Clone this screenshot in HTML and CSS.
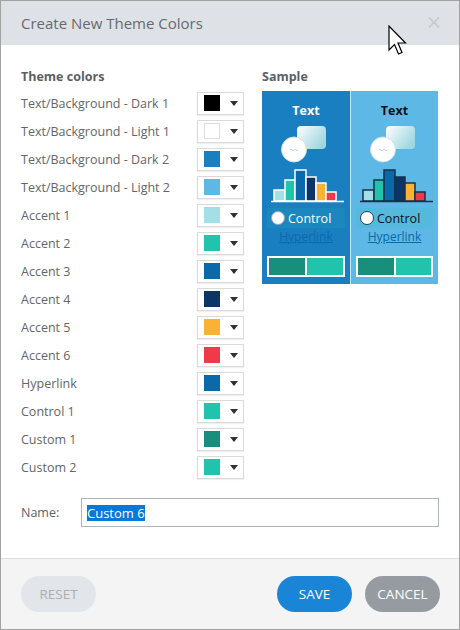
FILE: index.html
```html
<!DOCTYPE html>
<html>
<head>
<meta charset="utf-8">
<link rel="stylesheet" href="styles.css">
</head>
<body>
<div class="dialog">
  <div class="header">
    <span class="title">Create New Theme Colors</span>
    <svg class="close" width="12" height="11" viewBox="0 0 12 11"><path d="M1 0.5 L11 10.5 M11 0.5 L1 10.5" stroke="#c9cdd1" stroke-width="1.8" fill="none"/></svg>
  </div>
  <div class="body">
    <div class="columns">
      <div class="theme">
        <div class="heading">Theme colors</div>
        <div class="row"><span class="label">Text/Background - Dark 1</span><div class="picker"><span class="swatch c-black"></span><span class="caret"></span></div></div>
        <div class="row"><span class="label">Text/Background - Light 1</span><div class="picker"><span class="swatch c-white"></span><span class="caret"></span></div></div>
        <div class="row"><span class="label">Text/Background - Dark 2</span><div class="picker"><span class="swatch c-dark2"></span><span class="caret"></span></div></div>
        <div class="row"><span class="label">Text/Background - Light 2</span><div class="picker"><span class="swatch c-light2"></span><span class="caret"></span></div></div>
        <div class="row"><span class="label">Accent 1</span><div class="picker"><span class="swatch c-acc1"></span><span class="caret"></span></div></div>
        <div class="row"><span class="label">Accent 2</span><div class="picker"><span class="swatch c-acc2"></span><span class="caret"></span></div></div>
        <div class="row"><span class="label">Accent 3</span><div class="picker"><span class="swatch c-acc3"></span><span class="caret"></span></div></div>
        <div class="row"><span class="label">Accent 4</span><div class="picker"><span class="swatch c-acc4"></span><span class="caret"></span></div></div>
        <div class="row"><span class="label">Accent 5</span><div class="picker"><span class="swatch c-acc5"></span><span class="caret"></span></div></div>
        <div class="row"><span class="label">Accent 6</span><div class="picker"><span class="swatch c-acc6"></span><span class="caret"></span></div></div>
        <div class="row"><span class="label">Hyperlink</span><div class="picker"><span class="swatch c-acc3"></span><span class="caret"></span></div></div>
        <div class="row"><span class="label">Control 1</span><div class="picker"><span class="swatch c-acc2"></span><span class="caret"></span></div></div>
        <div class="row"><span class="label">Custom 1</span><div class="picker"><span class="swatch c-cust1"></span><span class="caret"></span></div></div>
        <div class="row"><span class="label">Custom 2</span><div class="picker"><span class="swatch c-acc2"></span><span class="caret"></span></div></div>
      </div>
      <div class="sample">
        <div class="heading">Sample</div>
        <div class="panel">
          <div class="half dark">
            <div class="stext">Text</div>
            <svg class="art" width="88" height="85" viewBox="0 0 88 85">
              <defs>
                <linearGradient id="g1" x1="0" y1="0" x2="1" y2="0.6">
                  <stop offset="0" stop-color="#ffffff"/>
                  <stop offset="1" stop-color="#9fd7e1"/>
                </linearGradient>
              </defs>
              <rect x="35" y="6" width="29" height="23" rx="4" fill="url(#g1)"/>
              <circle cx="32" cy="29.5" r="12.5" fill="#ffffff" stroke="#cfe0ea" stroke-width="1"/>
              <path d="M28 30 q1 -1.4 2 0 t2 0 t2 0 t2 0" stroke="#a9c7d6" stroke-width="0.8" fill="none"/>
              <g stroke="#ffffff" stroke-width="1.5">
                <rect x="12" y="70" width="11" height="11" fill="#a5dfe6"/>
                <rect x="23" y="60" width="10" height="21" fill="#20c4ad"/>
                <rect x="33" y="50" width="11" height="31" fill="#0a69a9"/>
                <rect x="44" y="57" width="10" height="24" fill="#0b3566"/>
                <rect x="54" y="63" width="10" height="18" fill="#f9b233"/>
                <rect x="64" y="72" width="10" height="9" fill="#ef3a4a"/>
              </g>
              <line x1="9" y1="81.5" x2="82" y2="81.5" stroke="#ffffff" stroke-width="1.5"/>
            </svg>
            <div class="control"><span class="radio"></span><span>Control</span></div>
            <div class="link">Hyperlink</div>
            <div class="pair"><span class="p1"></span><span class="p2"></span></div>
          </div>
          <div class="half light">
            <div class="stext">Text</div>
            <svg class="art" width="88" height="85" viewBox="0 0 88 85">
              <defs>
                <linearGradient id="g2" x1="0" y1="0" x2="1" y2="0.6">
                  <stop offset="0" stop-color="#ffffff"/>
                  <stop offset="1" stop-color="#9fd7e1"/>
                </linearGradient>
              </defs>
              <rect x="35" y="6" width="29" height="23" rx="4" fill="url(#g2)"/>
              <circle cx="32" cy="29.5" r="12.5" fill="#ffffff" stroke="#cfe0ea" stroke-width="1"/>
              <path d="M28 30 q1 -1.4 2 0 t2 0 t2 0 t2 0" stroke="#a9c7d6" stroke-width="0.8" fill="none"/>
              <g stroke="#18304c" stroke-width="1.5">
                <rect x="12" y="70" width="11" height="11" fill="#a5dfe6"/>
                <rect x="23" y="60" width="10" height="21" fill="#20c4ad"/>
                <rect x="33" y="50" width="11" height="31" fill="#0a69a9"/>
                <rect x="44" y="57" width="10" height="24" fill="#0b3566"/>
                <rect x="54" y="63" width="10" height="18" fill="#f9b233"/>
                <rect x="64" y="72" width="10" height="9" fill="#ef3a4a"/>
              </g>
              <line x1="9" y1="81.5" x2="82" y2="81.5" stroke="#18304c" stroke-width="1.5"/>
            </svg>
            <div class="control"><span class="radio"></span><span>Control</span></div>
            <div class="link">Hyperlink</div>
            <div class="pair"><span class="p1"></span><span class="p2"></span></div>
          </div>
        </div>
      </div>
    </div>
    <div class="name-row">
      <span class="name-label">Name:</span>
      <div class="input"><span class="sel">Custom 6</span></div>
    </div>
  </div>
  <div class="footer">
    <span class="btn reset">RESET</span>
    <span class="spacer"></span>
    <span class="btn save">SAVE</span>
    <span class="btn cancel">CANCEL</span>
  </div>
  <svg class="cursor" width="19" height="31" viewBox="0 0 19 31"><path d="M1 1 L1 25 L6.5 19.5 L10.5 29 L14 27.5 L10 18 L17.5 18 Z" fill="#ffffff" stroke="#000000" stroke-width="1.2" stroke-linejoin="miter"/></svg>
</div>
</body>
</html>
```
FILE: styles.css
```css
* { box-sizing: border-box; }
html, body { margin: 0; padding: 0; background: #ffffff; }
body { font-family: "Open Sans", "Noto Sans", sans-serif; }

.dialog {
  position: relative;
  width: 460px;
  height: 630px;
  border: 1px solid #a3a3a3;
  display: flex;
  flex-direction: column;
  background: #ffffff;
}

.header {
  height: 44px;
  flex: none;
  background: #dee2e6;
  display: flex;
  align-items: center;
  padding: 0 19px 0 20px;
}
.title {
  font-size: 15px;
  color: #666a6e;
  flex: 1;
  margin-top: -1px;
}
.close { margin-top: -1px; }

.body {
  flex: 1;
  padding: 23px 20px 0 20px;
}
.columns { display: flex; gap: 18px; }
.theme { width: 223px; }
.sample { width: 176px; }

.heading {
  font-size: 12.5px;
  font-weight: 700;
  color: #5c6064;
  line-height: 18px;
  margin-bottom: 3px;
}

.row {
  height: 28px;
  display: flex;
  align-items: center;
  justify-content: space-between;
}
.label { font-size: 12.5px; color: #62666a; }

.picker {
  width: 47px;
  height: 23px;
  border: 1px solid #dadada;
  box-shadow: 0 1px 1px rgba(0,0,0,0.06);
  background: #ffffff;
  display: flex;
  align-items: center;
  padding: 0 5px 0 6px;
}
.swatch { width: 16px; height: 16px; display: block; }
.caret {
  margin-left: auto;
  width: 0; height: 0;
  border-left: 4px solid transparent;
  border-right: 4px solid transparent;
  border-top: 5px solid #333333;
}

.c-black { background: #000000; }
.c-white { background: #ffffff; border: 1px solid #dddddd; }
.c-dark2 { background: #1a7fc1; }
.c-light2 { background: #5eb8e6; }
.c-acc1 { background: #a5dfe6; }
.c-acc2 { background: #20c4ad; }
.c-acc3 { background: #0a69a9; }
.c-acc4 { background: #0b3566; }
.c-acc5 { background: #f9b233; }
.c-acc6 { background: #ef3a4a; }
.c-cust1 { background: #188f7d; }

.panel {
  margin-top: 5px;
  display: flex;
  height: 193px;
}
.half { padding-top: 11px; }
.half.dark { width: 89px; background: #1a7fc1; border-right: 1px solid #cfe6f4; color: #ffffff; }
.half.light { width: 87px; background: #5eb8e6; color: #111111; }
.stext {
  font-size: 12.5px;
  font-weight: 700;
  line-height: 18px;
  text-align: center;
}
.art { display: block; }
.control {
  margin: 3px 5px 0 5px;
  height: 20px;
  background: rgba(32,196,173,0.13);
  display: flex;
  align-items: center;
  padding-left: 4px;
  gap: 3px;
  font-size: 12.5px;
}
.radio {
  width: 14px; height: 14px;
  border-radius: 50%;
  background: #ffffff;
  border: 1px solid #9aa6ae;
}
.light .radio { border-color: #2a3a48; }
.link {
  margin-top: 1px;
  line-height: 16px;
  font-size: 12px;
  text-align: center;
  color: #0a69a9;
  text-decoration: underline;
}
.pair {
  margin: 11px 5px 0 5px;
  height: 21px;
  border: 2px solid #ffffff;
  display: flex;
  gap: 2px;
  background: #ffffff;
}
.pair span { flex: 1; }
.p1 { background: #188f7d; }
.p2 { background: #20c4ad; }

.name-row {
  margin-top: 17px;
  display: flex;
  align-items: center;
}
.name-label { width: 60px; font-size: 12.5px; color: #5c6064; }
.input {
  flex: 1;
  height: 29px;
  border: 1px solid #abb6bf;
  display: flex;
  align-items: center;
  padding-left: 5px;
}
.sel {
  background: #0a78d7;
  color: #ffffff;
  font-size: 13px;
  line-height: 16px;
}

.footer {
  height: 71px;
  flex: none;
  border-top: 1px solid #dcdcdc;
  background: #f4f4f4;
  display: flex;
  align-items: flex-start;
  padding: 17px 19px 0 20px;
  gap: 13px;
}
.spacer { flex: 1; }
.btn {
  width: 75px;
  height: 36px;
  border-radius: 18px;
  display: flex;
  align-items: center;
  justify-content: center;
  font-size: 13.5px;
}
.reset { background: #e2e5e9; color: #a9aeb3; }
.save { background: #1a85d6; color: #ffffff; }
.cancel { background: #959ba1; color: #ffffff; }

.cursor {
  position: absolute;
  left: 387px;
  top: 24px;
}
```
